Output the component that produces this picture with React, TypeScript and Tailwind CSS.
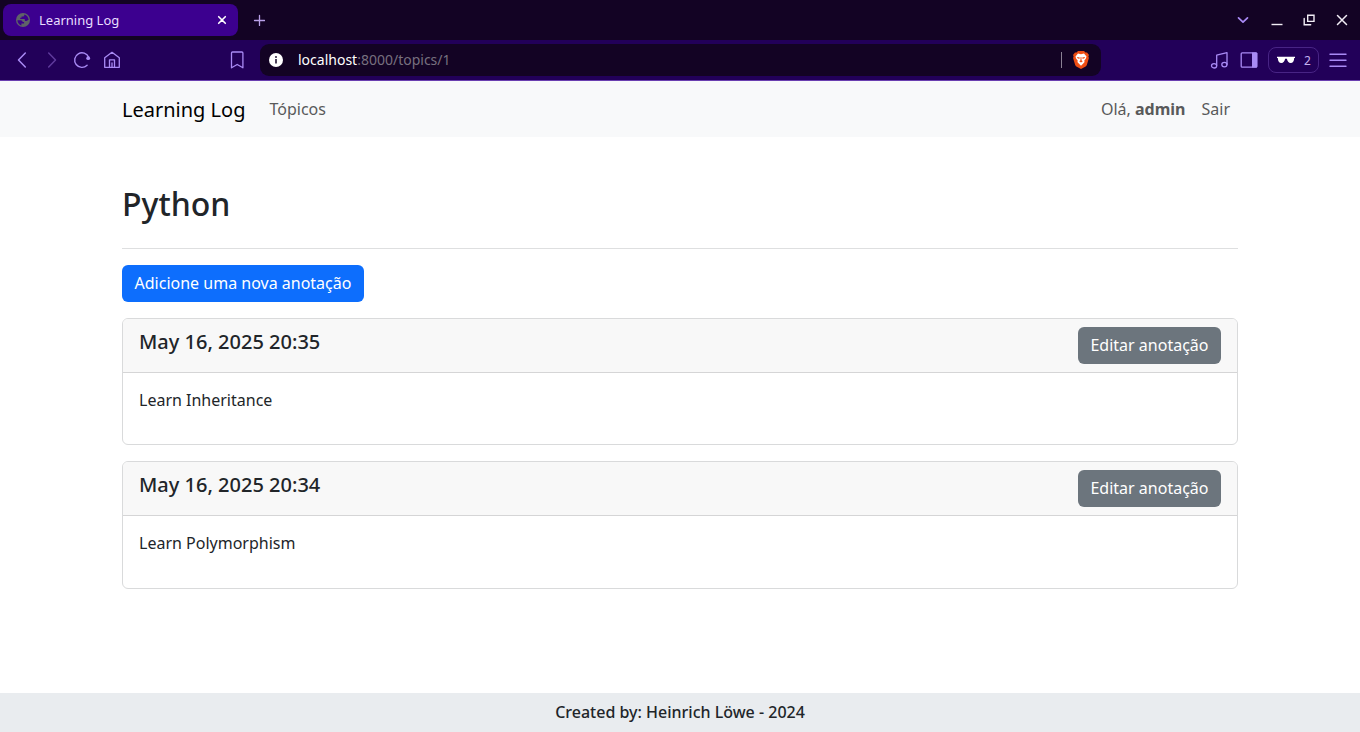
import type { ReactNode } from 'react';

function Glyph({ w, h, className, children }: { w: number; h: number; className?: string; children: ReactNode }) {
  return (
    <svg
      width={w}
      height={h}
      viewBox={`0 0 ${w} ${h}`}
      fill="none"
      stroke="currentColor"
      strokeWidth="1.3"
      strokeLinecap="round"
      strokeLinejoin="round"
      className={`shrink-0 ${className ?? ''}`}
    >
      {children}
    </svg>
  );
}

function TabStrip() {
  return (
    <div className="flex h-10 items-center bg-[#130324] pl-[3px]">
      <div className="flex h-8 w-[235px] items-center rounded-lg bg-[#3c008f] pl-[13px] pr-[10px] text-[13px] text-[#e9deff]">
        <Glyph w={14} h={14}>
          <circle cx="7" cy="7" r="7" fill="#5f6368" stroke="none" />
          <path
            d="M1.4 7.3h3.2c1.4 0 2 .7 2 1.7h1.5v1.6H5.4v1.8C3 11.800 1.500 9.800 1.400 7.300ZM8.300 1.600v.5c0 .9-.6 1.500-1.500 1.500H5.500v1.200H4.200v1.200h3.600c.7 0 1.100.4 1.100 1v1.100h1.200c.9 0 1.500-.4 1.800-1h.7c0-2.500-1.600-4.700-4.300-5.500Z"
            fill="#3c008f"
            stroke="none"
          />
        </Glyph>
        <span className="ml-[9px] flex-1 pt-[2px]">Learning Log</span>
        <Glyph w={12} h={12} className="text-white">
          <path d="M2.7 2.700 9.300 9.300M9.300 2.700 2.700 9.300" strokeWidth="1.600" />
        </Glyph>
      </div>
      <Glyph w={12} h={12} className="ml-[15px] text-[#b9a0e8]">
        <path d="M6.500 1.500v10M1.500 6.500h10" />
      </Glyph>
      <div className="ml-auto flex items-center pr-3 text-[#f1edf5]">
        <Glyph w={12} h={12} className="mr-[22px] text-[#a98af5]">
          <path d="M1.500 3.800 6 8.200l4.500-4.400" strokeWidth="1.700" />
        </Glyph>
        <Glyph w={12} h={12} className="mr-5">
          <path d="M.5 10.500h11" strokeWidth="1.400" strokeLinecap="butt" />
        </Glyph>
        <Glyph w={12} h={12} className="mr-[21px]">
          <path d="M4.700 1.200h6.300v6.200H4.700ZM1.200 4.500v6.300h6.500" strokeWidth="1.400" strokeLinejoin="miter" />
        </Glyph>
        <Glyph w={12} h={12}>
          <path d="m1.500 1.500 9 9M10.500 1.500l-9 9" strokeWidth="1.500" />
        </Glyph>
      </div>
    </div>
  );
}

function BraveLion() {
  return (
    <svg width="16" height="18" viewBox="0 0 16 18" className="shrink-0">
      <path d="M5 0h6l1.500 1.500 1.500-.1 2 2.500-.6 1.400.5 1.700-2 6.800c-.3.900-.9 1.500-1.700 2L8 18l-4.200-2.200c-.8-.5-1.400-1.100-1.700-2L.1 7l.500-1.700L0 3.900l2-2.500 1.500.1Z" fill="#f04e13" />
      <path d="m5 2.600 3 .6 3-.6 2.500 3-.600 2-1.700 2.200.4 1.300-1.600 1.600L8 14.800l-2-2.100-1.600-1.600.4-1.300-1.700-2.200-.600-2Z" fill="#fff" />
      <path d="m4.200 6 2.600.5-.5 1.400-2.100-.8ZM11.800 6l-2.600.5.5 1.400 2.100-.8ZM7.600 6h.8l.2 3.500 1.200.8-1.800 1.100-1.800-1.100 1.200-.8Z" fill="#f04e13" />
    </svg>
  );
}

function Toolbar() {
  return (
    <div className="flex h-[41px] items-center border-b border-[#6a3fb0] bg-[#220059] pl-[14px] pr-[13px] text-[#a98af5]">
      <Glyph w={16} h={18}>
        <path d="M11.300 2 4.500 9l6.800 7" strokeWidth="1.500" />
      </Glyph>
      <Glyph w={16} h={18} className="ml-[14px] text-[#5f3a9c]">
        <path d="m4.700 2 6.800 7-6.800 7" strokeWidth="1.500" />
      </Glyph>
      <Glyph w={18} h={18} className="ml-[13px]">
        <path d="M14.100 14.300A7.300 7.300 0 1 1 15.700 6.300" strokeWidth="1.400" />
        <circle cx="15.200" cy="7.200" r="1.900" fill="currentColor" stroke="none" />
      </Glyph>
      <Glyph w={18} h={18} className="ml-3">
        <path d="M1.700 6.800 9 1.300l7.300 5.500v9.500H1.700ZM6.500 16V8.800h5V16M9 12v4" strokeWidth="1.300" />
      </Glyph>
      <Glyph w={14} h={18} className="ml-[109px]">
        <path d="M1.500 2c0-.6.4-1 1-1h9.400c.6 0 1 .4 1 1v14.800L7.200 13.500l-5.700 3.300Z" strokeWidth="1.300" />
      </Glyph>
      <div className="ml-4 flex h-8 w-[841px] items-center rounded-[9px] bg-[#130324] pl-[9px] pr-3 text-sm text-[#77707f]">
        <Glyph w={14} h={14}>
          <circle cx="7" cy="7" r="7" fill="#fff" stroke="none" />
          <path d="M7 6v4.500" stroke="#130324" strokeWidth="1.500" strokeLinecap="butt" />
          <circle cx="7" cy="4" r=".9" fill="#130324" stroke="none" />
        </Glyph>
        <span className="ml-[15px] flex-1">
          <span className="text-white">localhost</span>:8000/topics/1
        </span>
        <span className="mr-[11px] h-4 w-px bg-[#8a8194]" />
        <BraveLion />
      </div>
      <Glyph w={18} h={18} className="ml-auto">
        <path d="M6.700 14.300V4.200L17 1.700v11.600" strokeWidth="1.300" />
        <ellipse cx="4.100" cy="14.800" rx="2.600" ry="2.200" />
        <ellipse cx="14.400" cy="13.600" rx="2.600" ry="2.200" />
      </Glyph>
      <Glyph w={18} h={18} className="ml-3">
        <rect x="1.200" y="1.800" width="15.500" height="14.400" rx="1" />
        <path d="M12 1.500h4.500c.5 0 .8.300.8.800v13.400c0 .500-.3.800-.8.800H12Z" fill="currentColor" stroke="none" />
      </Glyph>
      <div className="ml-[10px] flex h-[26px] w-[51px] items-center rounded-lg border border-[#482485] pl-2 text-xs text-[#c5b2f0]">
        <svg width="18" height="8" viewBox="0 0 18 8" className="shrink-0">
          <path d="M0 .8h18v1.100h-.8C17 5.200 15.900 7 13.700 7c-2.100 0-3.300-1.700-3.800-4.300H8.100C7.600 5.300 6.400 7 4.300 7 2.100 7 1 5.200.8 1.900H0Z" fill="#fff" />
        </svg>
        <span className="ml-[9px] pt-px">2</span>
      </div>
      <Glyph w={18} h={16} className="ml-[10px]">
        <path d="M1 2.300h16M1 8.300h16M1 14.300h16" strokeWidth="1.400" />
      </Glyph>
    </div>
  );
}

function EntryCard({ date, text }: { date: string; text: string }) {
  return (
    <article className="mb-4 h-[127.3px] overflow-hidden rounded-md border border-[#d9dadb]">
      <header className="flex h-[54px] items-start justify-between border-b border-[#d5d5d6] bg-[#f8f8f8] px-4 pt-2">
        <h5 className="mt-[2.6px] text-xl leading-6 font-medium">{date}</h5>
        <a className="h-[37px] rounded-md bg-[#6c757d] px-[12.500px] leading-[37px] text-white">Editar anotação</a>
      </header>
      <p className="px-4 pt-[15.100px] leading-6">{text}</p>
    </article>
  );
}

export default function App() {
  return (
    <div className="flex h-[732px] w-[1360px] flex-col overflow-hidden bg-white font-['Noto_Sans',sans-serif] text-[#212529]">
      <TabStrip />
      <Toolbar />
      <nav className="flex h-14 items-center bg-[#f8f9fa] px-[122px] text-[#595a5a]">
        <span className="mr-6 pt-[2px] text-xl text-black">Learning Log</span>
        <span>Tópicos</span>
        <span className="ml-auto">
          Olá, <b>admin</b>
        </span>
        <span className="mr-2 ml-4">Sair</span>
      </nav>
      <main className="flex-1 px-[122px] pt-12">
        <h2 className="text-[32px] leading-[38px] font-medium">Python</h2>
        <hr className="mt-[25px] border-[#dedfe0]" />
        <a className="mt-[15.700px] mb-4 block h-[37.300px] w-[242px] rounded-md bg-[#0d6efd] text-center leading-[37px] text-white">
          Adicione uma nova anotação
        </a>
        <EntryCard date="May 16, 2025 20:35" text="Learn Inheritance" />
        <EntryCard date="May 16, 2025 20:34" text="Learn Polymorphism" />
      </main>
      <footer className="h-[39px] bg-[#e9ecef] text-center leading-[39px] font-medium">Created by: Heinrich Löwe - 2024</footer>
    </div>
  );
}
